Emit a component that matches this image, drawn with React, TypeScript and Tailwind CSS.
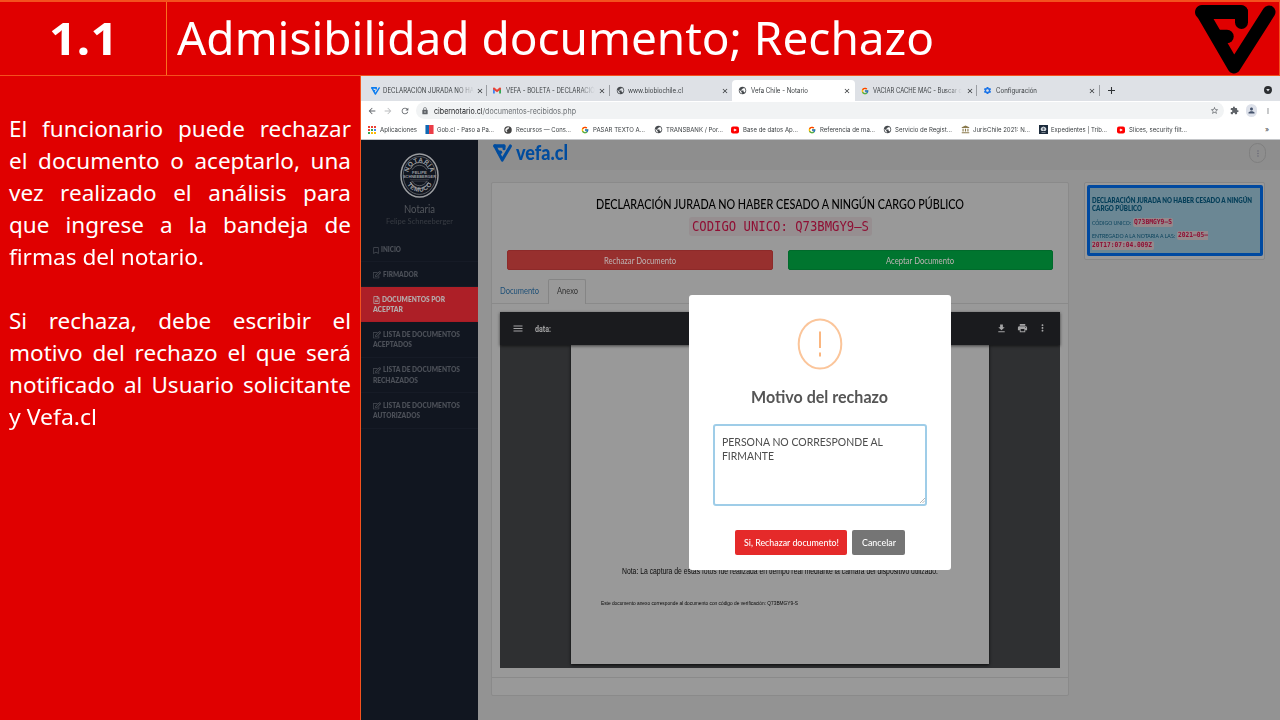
import { useLayoutEffect, useRef, type ReactNode } from "react";
import { FcGoogle } from "react-icons/fc";
import { FaRegBookmark, FaRegEdit, FaRegFileAlt } from "react-icons/fa";
import {
  MdAccountBalance,
  MdArrowBack,
  MdArrowForward,
  MdClose,
  MdExtension,
  MdFileDownload,
  MdLock,
  MdMenu,
  MdMoreVert,
  MdPerson,
  MdPrint,
  MdPublic,
  MdRefresh,
  MdSettings,
  MdStarBorder,
} from "react-icons/md";

/** One line of text, squeezed or stretched horizontally to fill the width of its box. */
function Fit({ className = "", children }: { className?: string; children: ReactNode }) {
  const box = useRef<HTMLSpanElement>(null);
  const text = useRef<HTMLSpanElement>(null);
  useLayoutEffect(() => {
    if (!box.current || !text.current) return;
    text.current.style.transform = "none";
    const natural = text.current.getBoundingClientRect().width;
    const wanted = box.current.getBoundingClientRect().width;
    text.current.style.transform = `scaleX(${wanted / natural})`;
  }, [children]);
  return (
    <span ref={box} className={`block shrink-0 ${className}`}>
      <span ref={text} className="inline-block origin-left whitespace-nowrap">
        {children}
      </span>
    </span>
  );
}

function VefaMark({ className }: { className: string }) {
  return (
    <svg viewBox="0 0 82 71" preserveAspectRatio="none" className={className} fill="none" stroke="currentColor" strokeLinecap="round" strokeLinejoin="round">
      <path d="M8 8H47" strokeWidth="14" />
      <path d="M47.500 8V18.500" strokeWidth="13" />
      <path d="M8 8L40 63L75 8" strokeWidth="13" />
      <path d="M24 32.500H33" strokeWidth="13.500" />
    </svg>
  );
}

function Gmail() {
  return (
    <svg viewBox="0 0 24 18" className="h-[7px] w-[8px]">
      <path d="M0 2v16h5.500V8z" fill="#4285f4" />
      <path d="M24 2v16h-5.500V8z" fill="#34a853" />
      <path d="M0 2c0-2 3-3 5-1l7 5.500L19 1c2-2 5-1 5 1v3L12 14 0 5z" fill="#ea4335" />
    </svg>
  );
}

function Video() {
  return (
    <svg viewBox="0 0 16 16" className="h-[8px] w-[8px]">
      <rect y="1" width="16" height="14" rx="4" fill="#f00" />
      <path d="M6.500 6l4 2-4 2z" fill="#fff" stroke="#fff" strokeWidth="1.500" />
    </svg>
  );
}

function AppsGrid() {
  return (
    <svg viewBox="0 0 16 16" className="h-[8px] w-[8px]">
      <path d="M0 0h4v4H0zM0 6h4v4H0z" fill="#ea4335" />
      <path d="M6 0h4v4H6zM12 0h4v4h-4z" fill="#ea4335" />
      <path d="M0 12h4v4H0zM6 6h4v4H6z" fill="#34a853" />
      <path d="M12 6h4v4h-4z" fill="#4285f4" />
      <path d="M6 12h4v4H6zM12 12h4v4h-4z" fill="#fbbc05" />
    </svg>
  );
}

function ChileFlag() {
  return (
    <svg viewBox="0 0 9 10" className="h-[9px] w-[9px]">
      <path d="M0 0h4v10H0z" fill="#0f69b4" />
      <path d="M4 0h5v10H4z" fill="#eb3c46" />
    </svg>
  );
}

function Orb() {
  return (
    <svg viewBox="0 0 16 16" className="h-[8px] w-[8px]">
      <circle cx="8" cy="8" r="7.500" fill="#444" />
      <path d="M2.500 9C2 5 6 1.500 10 2.500c1 2-1 3.500-3 4.500s-2 3 0 5c-2 1-4-1-4.500-3z" fill="#eee" />
    </svg>
  );
}

function Crest() {
  return (
    <svg viewBox="0 0 18 18" className="h-[9px] w-[9px]">
      <path d="M0 0h18v18H0z" fill="#1c2b3c" />
      <path d="M3 8l2-3 4-2 4 2 2 3-2 4H5zM5 14h8v1H5z" fill="#d5dbe0" />
      <path d="M6 8h6M9 5v6" stroke="#1c2b3c" />
    </svg>
  );
}

const globe = <MdPublic className="h-[9px] w-[9px] text-[#45494d]" />;
const google = <FcGoogle className="h-[8px] w-[8px]" />;

const tabs = [
  { icon: <VefaMark className="h-[8px] w-[9px] text-[#0a7cf0]" />, label: "DECLARACIÓN JURADA NO HA", width: "w-[91px]", fade: true, sep: true },
  { icon: <Gmail />, label: "VEFA - BOLETA - DECLARACIÓ", width: "w-[89px]", fade: true, sep: true },
  { icon: globe, label: "www.biobiochile.cl", width: "w-[55px]" },
  { icon: globe, label: "Vefa Chile - Notario", width: "w-[57px]", active: true },
  { icon: google, label: "VACIAR CACHE MAC - Buscar c", width: "w-[89px]", fade: true, sep: true },
  { icon: <MdSettings className="h-[9px] w-[9px] text-[#1a73e8]" />, label: "Configuración", width: "w-[41px]", sep: true },
];

const bookmarks = [
  { icon: <AppsGrid />, label: "Aplicaciones", cell: "w-[57px]", width: "w-[37px]" },
  { icon: <ChileFlag />, label: "Gob.cl - Paso a Pa...", cell: "w-[79px]", width: "w-[57px]" },
  { icon: <Orb />, label: "Recursos — Cons...", cell: "w-[77px]", width: "w-[55px]" },
  { icon: google, label: "PASAR TEXTO A...", cell: "w-[73px]", width: "w-[52px]" },
  { icon: globe, label: "TRANSBANK / Por...", cell: "w-[77px]", width: "w-[57px]" },
  { icon: <Video />, label: "Base de datos Ap...", cell: "w-[77px]", width: "w-[55px]" },
  { icon: google, label: "Referencia de ma...", cell: "w-[75px]", width: "w-[55px]" },
  { icon: globe, label: "Servicio de Regist...", cell: "w-[78px]", width: "w-[57px]" },
  { icon: <MdAccountBalance className="h-[9px] w-[9px] text-[#8a7a4c]" />, label: "JurisChile 2021: N...", cell: "w-[78px]", width: "w-[57px]" },
  { icon: <Crest />, label: "Expedientes | Trib...", cell: "w-[78px]", width: "w-[56px]" },
  { icon: <Video />, label: "Slices, security filt...", cell: "w-[78px]", width: "w-[58px]" },
];

function Browser() {
  return (
    <div className="font-[Inter,sans-serif] text-[#3c4043]">
      <div className="flex h-[25px] items-end bg-[#dee1e6] pl-[3.5px] text-[7px] leading-[10px]">
        {tabs.map((t) => (
          <div
            key={t.label}
            className={`relative flex h-[21px] w-[122.5px] shrink-0 items-center pl-[6px] ${t.active ? "rounded-t-[4px] bg-white" : ""}`}
          >
            <span className="flex w-[12.5px] shrink-0">{t.icon}</span>
            <Fit className={`${t.width} ${t.fade ? "[mask-image:linear-gradient(to_right,#000_82%,transparent)]" : ""}`}>{t.label}</Fit>
            <MdClose className="absolute right-[3.500px] h-[8px] w-[8px] text-[#303336]" />
            {t.sep && <span className="absolute right-0 h-[11px] w-px bg-[#9a9da2]" />}
          </div>
        ))}
        <span className="flex h-[21px] grow items-center justify-between pr-[8px] pb-[1px] pl-[8.5px]">
          <svg viewBox="0 0 8 8" className="h-[7px] w-[7px]" stroke="#303336" strokeWidth="1.200">
            <path d="M4 0v8M0 4h8" />
          </svg>
          <svg viewBox="0 0 16 16" className="h-[8px] w-[8px]">
            <circle cx="8" cy="8" r="8" fill="#2b2e31" />
            <path d="M4.500 6h7l-3.500 5z" fill="#dee1e6" />
          </svg>
        </span>
      </div>
      <div className="flex h-[19px] items-center bg-white pr-[8px] pl-[6px]">
        <MdArrowBack className="h-[10px] w-[10px] text-[#5f6368]" />
        <MdArrowForward className="ml-[6px] h-[10px] w-[10px] text-[#babcbe]" />
        <MdRefresh className="ml-[7px] h-[10px] w-[10px] text-[#5f6368]" />
        <div className="ml-[6px] flex h-[17px] w-[808px] items-center rounded-full bg-[#f1f3f4] pr-[5px] pl-[5px] text-[8px] leading-[10px]">
          <MdLock className="h-[8px] w-[8px] text-[#5f6368]" />
          <Fit className="ml-[4.5px] w-[142px] text-[#6b6f73]">
            <span className="text-[#202124]">cibernotario.cl</span>/documentos-recibidos.php
          </Fit>
          <MdStarBorder className="ml-auto h-[9px] w-[9px] text-[#5f6368]" />
        </div>
        <MdExtension className="ml-[6px] h-[9px] w-[9px] text-[#5f6368]" />
        <span className="ml-[7px] flex h-[13px] w-[11px] items-center justify-center rounded-full bg-[#dde1ea]">
          <MdPerson className="h-[9px] w-[9px] text-[#46546d]" />
        </span>
        <MdMoreVert className="ml-auto h-[10px] w-[8px] text-[#5f6368]" />
      </div>
      <div className="flex h-[20px] items-center border-b border-[#c4c6c9] bg-white pl-[7px] text-[6.500px] leading-[10px]">
        {bookmarks.map((b) => (
          <div key={b.label} className={`flex shrink-0 items-center ${b.cell}`}>
            <span className="flex w-[12px] shrink-0">{b.icon}</span>
            <Fit className={b.width}>{b.label}</Fit>
          </div>
        ))}
        <span className="ml-auto pr-[11px] text-[7px]">»</span>
      </div>
    </div>
  );
}

function Seal() {
  return (
    <svg viewBox="0 0 78 88" preserveAspectRatio="none" className="h-[45px] w-[39px] text-[#9b9da0]" fill="none" stroke="currentColor">
      <ellipse cx="39" cy="44" rx="37" ry="42" strokeWidth="3" />
      <ellipse cx="39" cy="44" rx="32.500" ry="37" strokeWidth="1" />
      <path d="M21 31A20 22 0 0 1 57 31M21 57A20 22 0 0 0 57 57" strokeWidth="1.800" />
      <path d="M24 33A18 20 0 0 1 54 33M24 55A18 20 0 0 0 54 55" strokeWidth="1" />
      <path id="seal-top" d="M16.500 44A22.500 26 0 0 1 61.500 44" stroke="none" />
      <path id="seal-bottom" d="M9 42A30 34 0 0 0 69 42" stroke="none" />
      <path d="M20 52h38M22 55h34" strokeWidth="1" strokeOpacity="0.5" />
      <g fill="currentColor" stroke="none" fontFamily="Liberation Sans, sans-serif" fontWeight="700" textAnchor="middle">
        <text fontSize="12.500">
          <textPath href="#seal-top" startOffset="50%" textLength="64">NOTARIA</textPath>
        </text>
        <text fontSize="12.500">
          <textPath href="#seal-bottom" startOffset="50%" textLength="60">TEMUCO</textPath>
        </text>
        <text x="39" y="42" fontSize="8.500">FELIPE</text>
        <text x="39" y="49.500" fontSize="8" textLength="66" lengthAdjust="spacingAndGlyphs">SCHNEEBERGER</text>
      </g>
    </svg>
  );
}

const edit = <FaRegEdit className="h-[7.500px] w-[8px]" />;

const menu = [
  { icon: <FaRegBookmark className="h-[7px] w-[6px]" />, first: "INICIO", width: "w-[20px]", second: "", secondWidth: "", height: "h-[25px]" },
  { icon: edit, first: "FIRMADOR", width: "w-[35px]", second: "", secondWidth: "", height: "h-[25px]" },
  { icon: <FaRegFileAlt className="h-[8px] w-[7px]" />, first: "DOCUMENTOS POR", width: "w-[63px]", second: "ACEPTAR", secondWidth: "w-[30px]", height: "h-[35px]", active: true },
  { icon: edit, first: "LISTA DE DOCUMENTOS", width: "w-[77px]", second: "ACEPTADOS", secondWidth: "w-[39px]", height: "h-[35.500px]" },
  { icon: edit, first: "LISTA DE DOCUMENTOS", width: "w-[77px]", second: "RECHAZADOS", secondWidth: "w-[45px]", height: "h-[35.500px]" },
  { icon: edit, first: "LISTA DE DOCUMENTOS", width: "w-[77px]", second: "AUTORIZADOS", secondWidth: "w-[47px]", height: "h-[35.500px]" },
];

function Sidebar() {
  return (
    <aside className="flex w-[117px] shrink-0 flex-col bg-[#111620]">
      <div className="flex h-[97px] flex-col items-center pt-[13px] text-[#54575d]">
        <Seal />
        <Fit className="mt-[5px] w-[31px] text-[10.500px] leading-[12px]">Notaria</Fit>
        <Fit className="mt-[2px] w-[67px] text-[7.500px] leading-[10px] text-[#383c43]">Felipe Schneeberger</Fit>
      </div>
      {menu.map((m) => (
        <div
          key={m.first + m.second}
          className={`flex shrink-0 flex-col justify-center border-b pt-[2px] pl-[12px] text-[7.500px] leading-[10.500px] font-extrabold ${m.height} ${
            m.active ? "border-[#a91c25] bg-[#ad1f27] text-[#b5a9aa]" : "border-[#161b26] text-[#4b4f57]"
          }`}
        >
          <span className="flex items-center gap-[2px]">
            {m.icon}
            <Fit className={m.width}>{m.first}</Fit>
          </span>
          {m.second && <Fit className={m.secondWidth}>{m.second}</Fit>}
        </div>
      ))}
    </aside>
  );
}

function Viewer() {
  return (
    <div className="flex h-[356px] flex-col bg-[#2f3032]">
      <div className="z-0 flex h-[33px] shrink-0 items-center bg-[#1a1b1e] px-[12px] text-[#a4a4a5] shadow-[0_1px_3px_rgba(0,0,0,0.6)]">
        <MdMenu className="h-[13px] w-[12px]" />
        <Fit className="ml-[11px] w-[16px] font-[Roboto,sans-serif] text-[8.500px] leading-[10px] font-bold">data:</Fit>
        <span className="ml-auto flex gap-[9.500px]">
          <MdFileDownload className="h-[13px] w-[11px]" />
          <MdPrint className="h-[12px] w-[11px]" />
          <MdMoreVert className="h-[12px] w-[11px]" />
        </span>
      </div>
      <div className="ml-[71px] h-[319px] w-[418px] bg-[#999] pt-[221px] font-['Liberation_Sans',sans-serif] text-[#0a0a0a] shadow-[0_1px_3px_rgba(0,0,0,0.8)]">
        <Fit className="ml-[51px] w-[316px] text-[8.500px] leading-[10px]">
          Nota: La captura de estas fotos fue realizada en tiempo real mediante la cámara del dispositivo utilizado.
        </Fit>
        <Fit className="mt-[23px] ml-[29.5px] w-[197px] text-[6px] leading-[8px]">
          Este documento anexo corresponde al documento con código de verificación: Q73BMGY9-S
        </Fit>
      </div>
    </div>
  );
}

function DocumentCard() {
  return (
    <section className="h-[514px] w-[578px] rounded-[2px] border border-[#8a8a8a] bg-[#999]">
      <div className="flex flex-col items-center pt-[14px]">
        <Fit className="w-[368px] text-[12.500px] leading-[16px] font-medium text-black">DECLARACIÓN JURADA NO HABER CESADO A NINGÚN CARGO PÚBLICO</Fit>
        <div className="mt-[4px] flex h-[19px] items-center rounded-[3px] bg-[#968e90] px-[3px]">
          <Fit className="w-[177px] font-['DejaVu_Sans_Mono',monospace] text-[13.500px] leading-[17px] text-[#8f0f34]">CODIGO UNICO: Q73BMGY9–S</Fit>
        </div>
      </div>
      <div className="mt-[14px] flex gap-[15px] pl-[15px] text-[8.500px] leading-[10px] text-[#bdb4b4]">
        <div className="flex h-[20px] w-[265.5px] items-center justify-center rounded-[2px] border border-[#8d2a29] bg-[#97302e] pt-px">
          <Fit className="w-[72px]">Rechazar Documento</Fit>
        </div>
        <div className="flex h-[20px] w-[265.5px] items-center justify-center rounded-[2px] border border-[#006a2b] bg-[#00752f] pt-px">
          <Fit className="w-[68px]">Aceptar Documento</Fit>
        </div>
      </div>
      <div className="mt-[8px] flex h-[26px] items-end border-b border-[#8a8a8a] text-[8.500px] leading-[10px]">
        <Fit className="mb-[7px] ml-[8px] w-[39px] text-[#1d4f77]">Documento</Fit>
        <div className="-mb-px ml-[9px] flex h-[25px] w-[38px] items-center justify-center rounded-t-[2px] border border-b-0 border-[#858585] bg-[#999] pb-[2px]">
          <Fit className="w-[21px] text-[#333]">Anexo</Fit>
        </div>
      </div>
      <div className="h-[374px] border-b border-[#8a8a8a] px-[8px] pt-[8px]">
        <Viewer />
      </div>
    </section>
  );
}

function RequestCard() {
  return (
    <section className="h-[78px] w-[181px] rounded-[2px] border border-[#868686] bg-[#999] p-[2px]">
      <div className="h-[71px] w-[176px] rounded-[2px] border-[3px] border-[#0049a0] bg-[#6b8794] pt-[9px] pl-[2px] text-[6.500px] leading-[7.500px] text-[#07405a]">
        <Fit className="w-[160px] font-extrabold">DECLARACIÓN JURADA NO HABER CESADO A NINGÚN</Fit>
        <Fit className="w-[50px] font-extrabold">CARGO PÚBLICO</Fit>
        <div className="mt-[6px] flex h-[9px] items-center gap-[2px]">
          <Fit className="w-[39px]">CÓDIGO UNICO:</Fit>
          <div className="rounded-[2px] bg-[#95898c] px-px text-[#8f0f34]">
            <Fit className="w-[38px] font-['DejaVu_Sans_Mono',monospace] text-[7px] leading-[9px] font-bold">Q73BMGY9–S</Fit>
          </div>
        </div>
        <div className="mt-[4px] flex h-[9px] items-center gap-[2px]">
          <Fit className="w-[83px]">ENTREGADO A LA NOTARIA A LAS:</Fit>
          <div className="rounded-l-[2px] bg-[#95898c] pl-px text-[#8f0f34]">
            <Fit className="w-[30px] font-['DejaVu_Sans_Mono',monospace] text-[7px] leading-[9px] font-bold">2021–05–</Fit>
          </div>
        </div>
        <div className="mt-px w-[62px] rounded-r-[2px] bg-[#95898c] text-[#8f0f34]">
          <Fit className="w-[60px] font-['DejaVu_Sans_Mono',monospace] text-[7px] leading-[9px] font-bold">20T17:07:04.009Z</Fit>
        </div>
      </div>
    </section>
  );
}

function RejectDialog() {
  return (
    <div className="absolute top-[155px] left-[328px] flex h-[275px] w-[262px] flex-col items-center rounded-[3px] bg-white pt-[23px] text-[#4d4d4d]">
      <svg viewBox="0 0 46 52" className="h-[52px] w-[46px]" fill="none" stroke="#fbc59a">
        <ellipse cx="23" cy="26" rx="21.300" ry="24.500" strokeWidth="2" />
        <path d="M23 13.500V30M23 34.500v4" strokeWidth="2" stroke="#fbb67f" />
      </svg>
      <Fit className="mt-[15px] mr-[1px] w-[137px] text-[17.500px] leading-[24px] font-bold text-[#555]">Motivo del rechazo</Fit>
      <div className="relative mt-[15px] h-[82px] w-[214px] rounded-[3px] border-2 border-[#9fcde8] pt-[9px] pl-[7px] text-[12px] leading-[14px]">
        <Fit className="w-[161px]">PERSONA NO CORRESPONDE AL</Fit>
        <Fit className="w-[52px]">FIRMANTE</Fit>
        <svg viewBox="0 0 5 5" className="absolute right-0 bottom-px h-[5px] w-[5px]" stroke="#888" strokeWidth="0.600">
          <path d="M0 5L5 0M2.500 5L5 2.500" />
        </svg>
      </div>
      <div className="mt-[24px] flex gap-[5px] text-[9px] leading-[11px] font-medium text-white">
        <div className="flex h-[25px] w-[112px] items-center justify-center rounded-[2px] bg-[#e52a2a]">
          <Fit className="w-[95px]">Si, Rechazar documento!</Fit>
        </div>
        <div className="flex h-[25px] w-[53px] items-center justify-center rounded-[2px] bg-[#757575]">
          <Fit className="w-[34px]">Cancelar</Fit>
        </div>
      </div>
    </div>
  );
}

const lines = [
  { text: "El funcionario puede rechazar", full: true },
  { text: "el documento o aceptarlo, una", full: true },
  { text: "vez realizado el análisis para", full: true },
  { text: "que ingrese a la bandeja de", full: true },
  { text: "firmas del notario.", width: "w-[195px]" },
  { text: "" },
  { text: "Si rechaza, debe escribir el", full: true },
  { text: "motivo del rechazo el que será", full: true },
  { text: "notificado al Usuario solicitante", full: true },
  { text: "y Vefa.cl", width: "w-[88px]" },
];

export default function App() {
  return (
    <div className="flex h-[720px] w-[1280px] flex-col overflow-hidden bg-[#e00000] font-[Lato,sans-serif] text-white">
      <header className="flex h-[76px] shrink-0 border-t-2 border-r border-b border-[#f4511e]">
        <div className="flex w-[167px] justify-center border-r border-[#f9701e] pt-[8px]">
          <Fit className="w-[69px] font-['Open_Sans',sans-serif] text-[45px] leading-[56px] font-bold">1.1</Fit>
        </div>
        <Fit className="ml-[10px] w-[757px] pt-[7px] font-['Noto_Sans',sans-serif] text-[46px] leading-[56px]">Admisibilidad documento; Rechazo</Fit>
        <VefaMark className="mt-[2px] mr-[3px] ml-auto h-[71px] w-[82px] text-black" />
      </header>
      <div className="flex min-h-0 grow">
        <div className="w-[360px] shrink-0 pt-[37px] pl-[9px] font-['Noto_Sans',sans-serif] text-[22.500px] leading-[32px]">
          {lines.map((l, i) => (
            <div key={i} className="h-[32px]">
              {l.full ? (
                <span className="block w-[342px] text-justify [text-align-last:justify]">{l.text}</span>
              ) : (
                l.text && <Fit className={l.width}>{l.text}</Fit>
              )}
            </div>
          ))}
        </div>
        <div className="flex grow flex-col border-l border-[#f4511e]">
          <Browser />
          <div className="relative flex grow bg-[#939393]">
            <Sidebar />
            <div className="flex grow flex-col">
              <div className="flex h-[30px] items-start bg-[#8e8e8e] pr-[14px] pl-[15px] text-[#004c9e]">
                <VefaMark className="mt-[4px] h-[18px] w-[19px]" />
                <Fit className="mt-px ml-[4px] w-[52px] text-[20px] leading-[22px] font-black">vefa.cl</Fit>
                <span className="mt-[3px] ml-auto flex h-[20px] w-[17px] items-center justify-center rounded-full border border-[#7f7f7f]">
                  <MdMoreVert className="h-[11px] w-[10px] text-[#6b6b78]" />
                </span>
              </div>
              <div className="flex items-start gap-[15px] pt-[12px] pl-[13px]">
                <DocumentCard />
                <RequestCard />
              </div>
            </div>
            <RejectDialog />
          </div>
        </div>
      </div>
    </div>
  );
}
